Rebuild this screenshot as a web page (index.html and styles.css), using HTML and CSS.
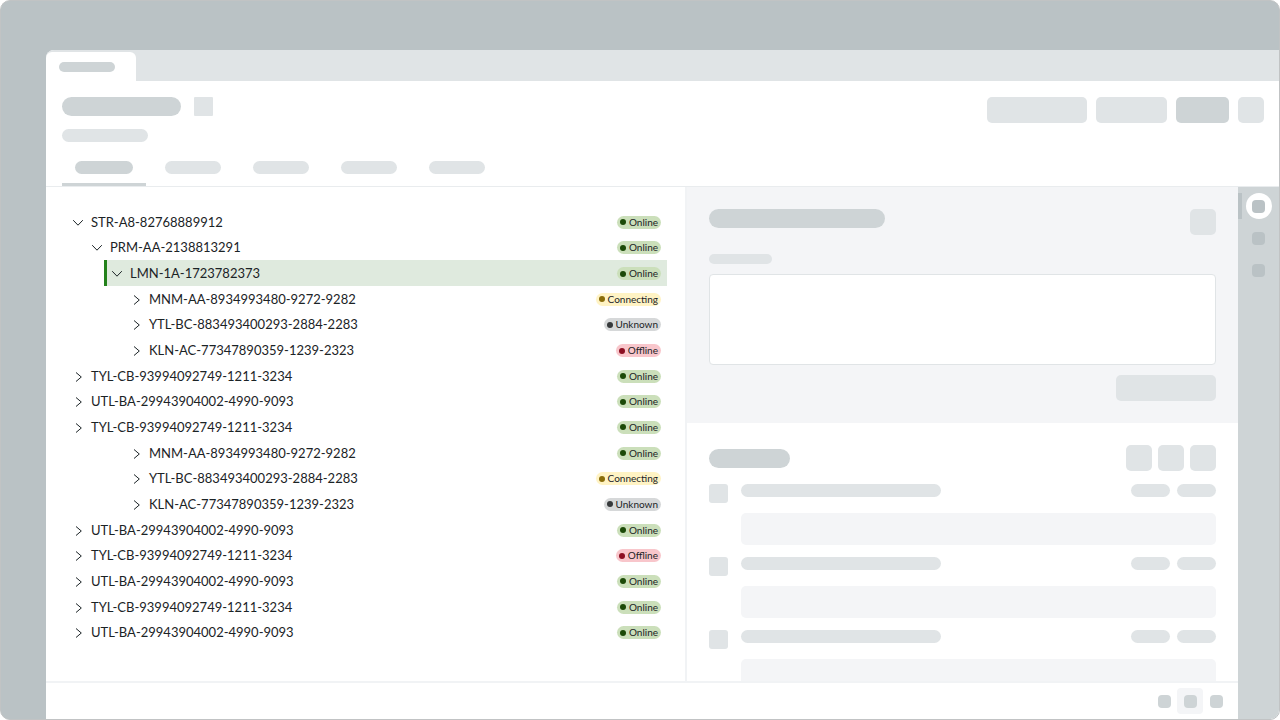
FILE: index.html
```html
<!DOCTYPE html>
<html lang="en">
<head>
    <meta charset="UTF-8">
    <meta name="viewport" content="width=device-width, initial-scale=1.0">
    <title>Devices</title>
    <link rel="stylesheet" href="styles.css">
</head>
<body>
    <svg class="sprite" aria-hidden="true">
        <symbol id="chevron-down" viewBox="0 0 14 14"><path d="M2.2 5.2L7 10.2L11.8 5.2"/></symbol>
        <symbol id="chevron-right" viewBox="0 0 14 14"><path d="M5 3.5L10.3 8L5 12.5"/></symbol>
    </svg>

    <div class="frame">
        <div class="app">
            <div class="tab-strip">
                <div class="window-tab"><span class="bone dark thin w-56"></span></div>
            </div>

            <header class="header">
                <div class="header-top">
                    <div>
                        <div class="title-row">
                            <span class="bone dark thick w-119"></span>
                            <span class="square square-sm title-icon"></span>
                        </div>
                        <span class="bone w-86"></span>
                    </div>
                    <div class="header-actions">
                        <button class="box w-100" aria-label="Action"></button>
                        <button class="box w-71" aria-label="Action"></button>
                        <button class="box dark w-53" aria-label="Save"></button>
                        <button class="box w-26" aria-label="More"></button>
                    </div>
                </div>
                <nav class="tabs">
                    <a href="#" class="tab active" aria-label="Tab 1"><span class="bone dark w-58"></span></a>
                    <a href="#" class="tab" aria-label="Tab 2"><span class="bone w-56"></span></a>
                    <a href="#" class="tab" aria-label="Tab 3"><span class="bone w-56"></span></a>
                    <a href="#" class="tab" aria-label="Tab 4"><span class="bone w-56"></span></a>
                    <a href="#" class="tab" aria-label="Tab 5"><span class="bone w-56"></span></a>
                </nav>
            </header>

            <div class="body">
                <div class="workspace">
                    <main class="columns">
                        <ul class="tree">
                            <li class="node"><button class="toggle" aria-label="Collapse"><svg><use href="#chevron-down"/></svg></button><span class="name">STR-A8-82768889912</span><span class="badge online">Online</span></li>
                            <li class="node level-1"><button class="toggle" aria-label="Collapse"><svg><use href="#chevron-down"/></svg></button><span class="name">PRM-AA-2138813291</span><span class="badge online">Online</span></li>
                            <li class="node level-2 selected"><button class="toggle" aria-label="Collapse"><svg><use href="#chevron-down"/></svg></button><span class="name">LMN-1A-1723782373</span><span class="badge online">Online</span></li>
                            <li class="node level-3"><button class="toggle" aria-label="Expand"><svg><use href="#chevron-right"/></svg></button><span class="name">MNM-AA-8934993480-9272-9282</span><span class="badge connecting">Connecting</span></li>
                            <li class="node level-3"><button class="toggle" aria-label="Expand"><svg><use href="#chevron-right"/></svg></button><span class="name">YTL-BC-883493400293-2884-2283</span><span class="badge unknown">Unknown</span></li>
                            <li class="node level-3"><button class="toggle" aria-label="Expand"><svg><use href="#chevron-right"/></svg></button><span class="name">KLN-AC-77347890359-1239-2323</span><span class="badge offline">Offline</span></li>
                            <li class="node"><button class="toggle" aria-label="Expand"><svg><use href="#chevron-right"/></svg></button><span class="name">TYL-CB-93994092749-1211-3234</span><span class="badge online">Online</span></li>
                            <li class="node"><button class="toggle" aria-label="Expand"><svg><use href="#chevron-right"/></svg></button><span class="name">UTL-BA-29943904002-4990-9093</span><span class="badge online">Online</span></li>
                            <li class="node"><button class="toggle" aria-label="Expand"><svg><use href="#chevron-right"/></svg></button><span class="name">TYL-CB-93994092749-1211-3234</span><span class="badge online">Online</span></li>
                            <li class="node level-3"><button class="toggle" aria-label="Expand"><svg><use href="#chevron-right"/></svg></button><span class="name">MNM-AA-8934993480-9272-9282</span><span class="badge online">Online</span></li>
                            <li class="node level-3"><button class="toggle" aria-label="Expand"><svg><use href="#chevron-right"/></svg></button><span class="name">YTL-BC-883493400293-2884-2283</span><span class="badge connecting">Connecting</span></li>
                            <li class="node level-3"><button class="toggle" aria-label="Expand"><svg><use href="#chevron-right"/></svg></button><span class="name">KLN-AC-77347890359-1239-2323</span><span class="badge unknown">Unknown</span></li>
                            <li class="node"><button class="toggle" aria-label="Expand"><svg><use href="#chevron-right"/></svg></button><span class="name">UTL-BA-29943904002-4990-9093</span><span class="badge online">Online</span></li>
                            <li class="node"><button class="toggle" aria-label="Expand"><svg><use href="#chevron-right"/></svg></button><span class="name">TYL-CB-93994092749-1211-3234</span><span class="badge offline">Offline</span></li>
                            <li class="node"><button class="toggle" aria-label="Expand"><svg><use href="#chevron-right"/></svg></button><span class="name">UTL-BA-29943904002-4990-9093</span><span class="badge online">Online</span></li>
                            <li class="node"><button class="toggle" aria-label="Expand"><svg><use href="#chevron-right"/></svg></button><span class="name">TYL-CB-93994092749-1211-3234</span><span class="badge online">Online</span></li>
                            <li class="node"><button class="toggle" aria-label="Expand"><svg><use href="#chevron-right"/></svg></button><span class="name">UTL-BA-29943904002-4990-9093</span><span class="badge online">Online</span></li>
                        </ul>

                        <aside class="side">
                            <form class="note-form">
                                <div class="note-head">
                                    <span class="bone dark thick w-176"></span>
                                    <button type="button" class="box w-26" aria-label="Close"></button>
                                </div>
                                <label for="note" aria-label="Note"><span class="bone thin w-63"></span></label>
                                <textarea id="note"></textarea>
                                <button type="button" class="box w-100 submit" aria-label="Submit"></button>
                            </form>

                            <section class="feed">
                                <div class="feed-head">
                                    <span class="bone dark thick w-81"></span>
                                    <div class="feed-actions">
                                        <button class="box w-26" aria-label="Search"></button>
                                        <button class="box w-26" aria-label="Filter"></button>
                                        <button class="box w-26" aria-label="Sort"></button>
                                    </div>
                                </div>
                                <article class="entry">
                                    <span class="square"></span>
                                    <div class="entry-main">
                                        <div class="entry-head"><span class="bone w-200"></span><span class="bone w-39"></span><span class="bone w-39"></span></div>
                                        <div class="entry-body"></div>
                                    </div>
                                </article>
                                <article class="entry">
                                    <span class="square"></span>
                                    <div class="entry-main">
                                        <div class="entry-head"><span class="bone w-200"></span><span class="bone w-39"></span><span class="bone w-39"></span></div>
                                        <div class="entry-body"></div>
                                    </div>
                                </article>
                                <article class="entry">
                                    <span class="square"></span>
                                    <div class="entry-main">
                                        <div class="entry-head"><span class="bone w-200"></span><span class="bone w-39"></span><span class="bone w-39"></span></div>
                                        <div class="entry-body"></div>
                                    </div>
                                </article>
                            </section>
                        </aside>
                    </main>

                    <footer class="footer">
                        <button class="icon-button" aria-label="View 1"><span class="dot"></span></button>
                        <button class="icon-button active" aria-label="View 2"><span class="dot"></span></button>
                        <button class="icon-button" aria-label="View 3"><span class="dot"></span></button>
                    </footer>
                </div>

                <nav class="rail">
                    <button class="rail-button active" aria-label="Panel 1"><span class="dot"></span></button>
                    <button class="rail-button" aria-label="Panel 2"><span class="dot"></span></button>
                    <button class="rail-button" aria-label="Panel 3"><span class="dot"></span></button>
                </nav>
            </div>
        </div>
    </div>
</body>
</html>
```
FILE: styles.css
```css
* {
    box-sizing: border-box;
}
body {
    margin: 0;
    background: #fff;
    font-family: Lato, sans-serif;
    color: #1b2326;
}
button {
    padding: 0;
    border: none;
    background: none;
    cursor: pointer;
}
.sprite {
    display: none;
}

.frame {
    display: flex;
    height: 100vh;
    padding: 49px 0 0 45px;
    border: 1px solid #c1c3c4;
    border-radius: 10px;
    background: #bac2c5;
    overflow: hidden;
}
.app {
    flex: 1;
    display: flex;
    flex-direction: column;
    min-width: 0;
    background: #fff;
    border-top-left-radius: 8px;
    overflow: hidden;
}

/* placeholder shapes */
.bone {
    display: block;
    height: 13px;
    border-radius: 10px;
    background: #e0e4e6;
}
.thin {
    height: 10px;
}
.thick {
    height: 19px;
}
.square {
    width: 19px;
    height: 19px;
    flex: none;
    border-radius: 3px;
    background: #e0e4e6;
}
.square-sm {
    border-radius: 1px;
}
.box {
    height: 26px;
    border-radius: 5px;
    background: #e0e4e6;
}
.dark {
    background: #ced4d6;
}
.w-26 { width: 26px; }
.w-39 { width: 39px; }
.w-53 { width: 53px; }
.w-56 { width: 56px; }
.w-58 { width: 58px; }
.w-63 { width: 63px; }
.w-71 { width: 71px; }
.w-81 { width: 81px; }
.w-86 { width: 86px; }
.w-100 { width: 100px; }
.w-119 { width: 119px; }
.w-176 { width: 176px; }
.w-200 { width: 200px; }

.tab-strip {
    flex: none;
    height: 31px;
    padding-top: 2px;
    background: #e0e4e6;
}
.window-tab {
    width: 90px;
    height: 29px;
    padding: 10px 13px;
    border-radius: 6px 6px 0 0;
    background: #fff;
}

.header {
    flex: none;
    padding: 16px 15px 0 16px;
    border-bottom: 1px solid #e9ecee;
}
.header-top {
    display: flex;
    justify-content: space-between;
}
.title-row {
    display: flex;
    gap: 13px;
    margin-bottom: 13px;
}
.header-actions {
    display: flex;
    gap: 9px;
}
.tabs {
    display: flex;
    gap: 6px;
    margin-top: 19px;
}
.tab {
    padding: 0 13px 12px;
}
.tab.active {
    padding-bottom: 9px;
    border-bottom: 3px solid #ced4d6;
}

.body {
    flex: 1;
    display: flex;
    min-height: 0;
}
.workspace {
    flex: 1;
    display: flex;
    flex-direction: column;
    min-width: 0;
}
.columns {
    flex: 1;
    display: grid;
    grid-template-columns: 641fr 551fr;
    min-height: 0;
}

.tree {
    display: grid;
    grid-auto-rows: 1fr;
    margin: 0;
    padding: 22px 18px 36px 19px;
    border-right: 2px solid #f1f3f5;
    list-style: none;
}
.node {
    display: flex;
    align-items: center;
    padding-right: 6px;
    border-left: 3px solid transparent;
    font-size: 13px;
    line-height: 16px;
}
.level-1 { margin-left: 19px; }
.level-2 { margin-left: 39px; }
.level-3 { margin-left: 58px; }
.selected {
    border-left-color: #23811b;
    background: #dfeade;
}
.toggle {
    width: 20px;
    height: 14px;
    margin-right: 3px;
}
.toggle svg {
    display: block;
    width: 14px;
    height: 14px;
    margin: 0 auto;
    fill: none;
    stroke: #1b2326;
    stroke-width: 1;
}
.name {
    flex: 1;
}
.badge {
    display: flex;
    align-items: center;
    gap: 3px;
    height: 13px;
    margin-top: 1px;
    padding: 0 3px;
    border-radius: 7px;
    font-size: 10px;
    line-height: 13px;
}
.badge::before {
    content: "";
    width: 6px;
    height: 6px;
    border-radius: 50%;
    background: currentColor;
}
.online { background: #cbdfba; }
.online::before { background: #1c4a08; }
.connecting { background: #fff3c4; }
.connecting::before { background: #8a6d0b; }
.unknown { background: #d6d8d9; }
.unknown::before { background: #36393b; }
.offline { background: #f8c6cb; }
.offline::before { background: #8c0f22; }

.side {
    min-height: 0;
    overflow: hidden;
}
.note-form {
    display: flex;
    flex-direction: column;
    padding: 22px;
    background: #f4f5f7;
}
.note-head {
    display: flex;
    justify-content: space-between;
    margin-bottom: 19px;
}
#note {
    height: 91px;
    margin: 10px 0;
    border: 1px solid #e0e4e6;
    border-radius: 4px;
    background: #fff;
    resize: none;
}
.submit {
    align-self: flex-end;
}
.feed {
    padding: 22px 22px 0;
}
.feed-head {
    display: flex;
    align-items: center;
    justify-content: space-between;
    margin-bottom: 13px;
}
.feed-actions {
    display: flex;
    gap: 6px;
}
.entry {
    display: flex;
    gap: 13px;
    margin-bottom: 12px;
}
.entry-main {
    flex: 1;
}
.entry-head {
    display: flex;
    gap: 7px;
    margin-bottom: 16px;
}
.entry-head .w-200 {
    margin-right: auto;
}
.entry-body {
    height: 32px;
    border-radius: 5px;
    background: #f4f5f7;
}

.footer {
    flex: none;
    display: flex;
    justify-content: flex-end;
    padding: 5px 9px;
    border-top: 2px solid #f1f3f5;
}
.icon-button,
.rail-button {
    display: flex;
    align-items: center;
    justify-content: center;
    width: 26px;
    height: 26px;
}
.icon-button.active {
    border-radius: 4px;
    background: #f4f5f7;
}
.dot {
    width: 13px;
    height: 13px;
    border-radius: 4px;
    background: #ced4d6;
}

.rail {
    flex: none;
    display: flex;
    flex-direction: column;
    align-items: center;
    gap: 6px;
    width: 41px;
    padding-top: 6px;
    background: #ced4d6;
}
.rail-button {
    position: relative;
}
.rail-button .dot {
    background: #bac2c5;
}
.rail-button.active {
    border-radius: 50%;
    background: #fff;
}
/* marker on the rail's edge beside the open panel */
.rail-button.active::before {
    content: "";
    position: absolute;
    top: 0;
    left: -8px;
    width: 4px;
    height: 26px;
    background: #bac2c5;
}
```
